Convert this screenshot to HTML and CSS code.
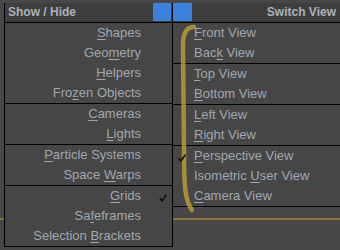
FILE: index.html
```html
<!DOCTYPE html>
<html>
<head>
<meta charset="utf-8">
<link rel="stylesheet" href="styles.css">
</head>
<body>
<div class="app">
  <section class="menu menu-left">
    <header class="menu-head">
      <span class="title">Show / Hide</span>
      <span class="swatch"></span>
    </header>
    <ul class="group">
      <li class="item"><span class="label"><u>S</u>hapes</span><span class="slot"></span></li>
      <li class="item"><span class="label">Geo<u>m</u>etry</span><span class="slot"></span></li>
      <li class="item"><span class="label"><u>H</u>elpers</span><span class="slot"></span></li>
      <li class="item"><span class="label">Fro<u>z</u>en Objects</span><span class="slot"></span></li>
    </ul>
    <ul class="group">
      <li class="item"><span class="label"><u>C</u>ameras</span><span class="slot"></span></li>
      <li class="item"><span class="label"><u>L</u>ights</span><span class="slot"></span></li>
    </ul>
    <ul class="group">
      <li class="item"><span class="label"><u>P</u>article Systems</span><span class="slot"></span></li>
      <li class="item"><span class="label">Space <u>W</u>arps</span><span class="slot"></span></li>
    </ul>
    <ul class="group">
      <li class="item"><span class="label"><u>G</u>rids</span><span class="slot"><svg class="check" viewBox="0 0 8 8" width="8" height="8"><path d="M0.8 4.2 L3 6.8 L7.4 0.6" fill="none" stroke="#111" stroke-width="1.6"/></svg></span></li>
      <li class="item"><span class="label">Sa<u>f</u>eframes</span><span class="slot"></span></li>
      <li class="item"><span class="label">Selection <u>B</u>rackets</span><span class="slot"></span></li>
    </ul>
  </section>
  <section class="menu menu-right">
    <header class="menu-head">
      <span class="swatch"></span>
      <span class="title">Switch View</span>
    </header>
    <ul class="group">
      <li class="item"><span class="slot"></span><span class="label"><u>F</u>ront View</span></li>
      <li class="item"><span class="slot"></span><span class="label">Bac<u>k</u> View</span></li>
    </ul>
    <ul class="group">
      <li class="item"><span class="slot"></span><span class="label"><u>T</u>op View</span></li>
      <li class="item"><span class="slot"></span><span class="label"><u>B</u>ottom View</span></li>
    </ul>
    <ul class="group">
      <li class="item"><span class="slot"></span><span class="label"><u>L</u>eft View</span></li>
      <li class="item"><span class="slot"></span><span class="label"><u>R</u>ight View</span></li>
    </ul>
    <ul class="group">
      <li class="item"><span class="slot"><svg class="check" viewBox="0 0 8 8" width="8" height="8"><path d="M0.8 4.2 L3 6.8 L7.4 0.6" fill="none" stroke="#111" stroke-width="1.6"/></svg></span><span class="label"><u>P</u>erspective View</span></li>
      <li class="item"><span class="slot"></span><span class="label">Isometric <u>U</u>ser View</span></li>
      <li class="item"><span class="slot"></span><span class="label"><u>C</u>amera View</span></li>
    </ul>
  </section>
</div>
<svg class="annot" width="340" height="250" viewBox="0 0 340 250">
  <path d="M194 27 C187 27 183 33 183 45 L184 150 C184 186 185 201 192 210" fill="none" stroke="rgba(190,160,50,0.8)" stroke-width="4.5" stroke-linecap="round"/>
</svg>
</body>
</html>
```
FILE: styles.css
```css
* { box-sizing: border-box; }
html, body { margin: 0; padding: 0; }
body {
  width: 340px;
  height: 250px;
  overflow: hidden;
  position: relative;
  font-family: "Liberation Sans", Arial, sans-serif;
  background-color: #474747;
  background-image: linear-gradient(#8a7532, #8a7532);
  background-size: 100% 2px;
  background-position: 0 218px;
  background-repeat: no-repeat;
}
.app {
  display: flex;
  align-items: flex-start;
  padding: 3px 0 0 4px;
}
.menu { background: #464646; }
.menu-left {
  width: 169px;
  flex: none;
  border-left: 1px solid #000;
  border-right: 1px solid #000;
  border-bottom: 1px solid #000;
}
.menu-right {
  flex: 1;
  border-bottom: 1px solid #000;
}
.menu-head {
  height: 20px;
  display: flex;
  align-items: flex-start;
  background: #3e3e3e;
  border-bottom: 1px solid #000;
  font-weight: bold;
  font-size: 12px;
  line-height: 19px;
  color: #aab2ba;
}
.menu-left .menu-head {
  justify-content: space-between;
  padding-left: 3px;
}
.menu-right .menu-head {
  justify-content: space-between;
  padding-right: 4px;
}
.swatch {
  display: block;
  height: 18px;
  background: #3b82dc;
}
.menu-left .swatch { width: 18px; margin-right: 1px; }
.menu-right .swatch { width: 19px; }
.group {
  list-style: none;
  margin: 0;
  padding: 0;
}
.group + .group { border-top: 1px solid #000; }
.item {
  height: 20px;
  display: flex;
  align-items: center;
  font-size: 13px;
  line-height: 20px;
  color: #a0a8b1;
  white-space: nowrap;
}
.label u { text-decoration-thickness: 1px; text-underline-offset: 2px; }
.menu-left .item { justify-content: flex-end; }
.slot {
  display: flex;
  align-items: center;
  height: 20px;
}
.menu-left .slot { width: 31px; padding-left: 18px; }
.menu-right .slot { width: 21px; padding-left: 5px; }
.check { display: block; margin-top: 3px; position: relative; z-index: 2; }
.annot {
  position: absolute;
  left: 0;
  top: 0;
  z-index: 1;
  pointer-events: none;
}
```
